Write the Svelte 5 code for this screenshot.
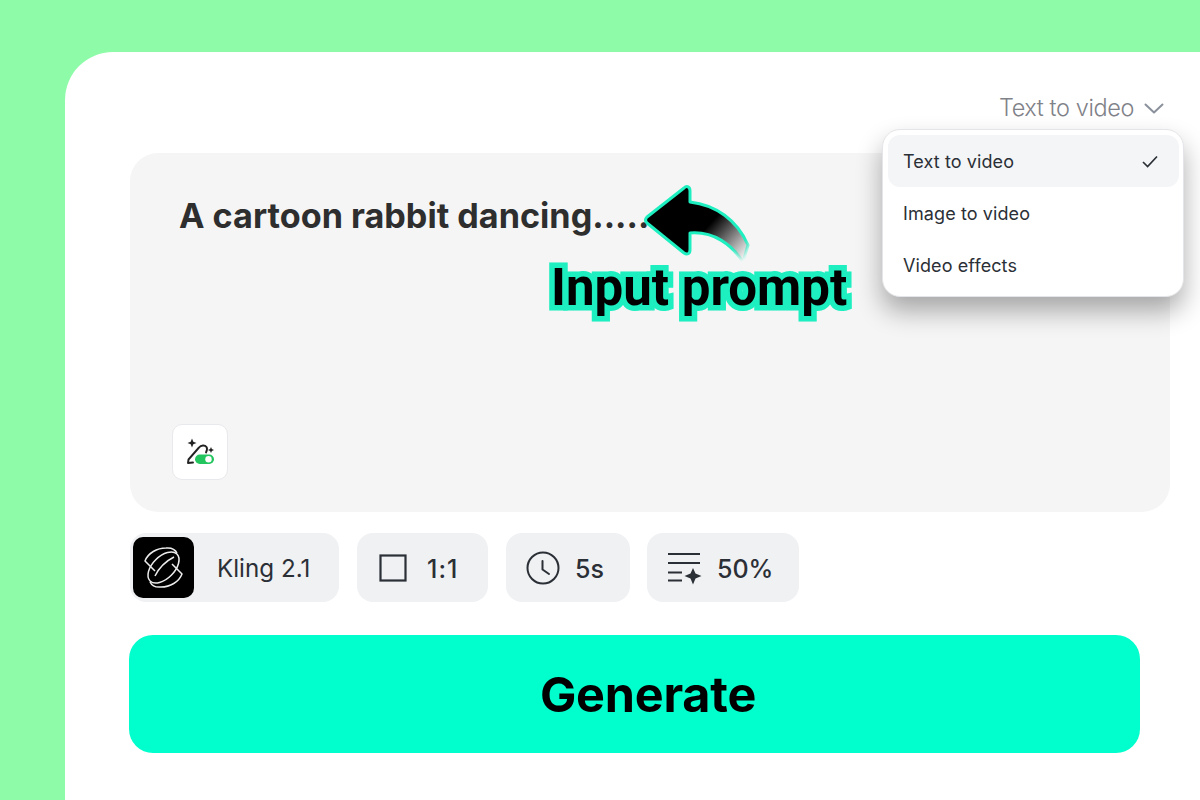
<script>
  const items = ['Text to video', 'Image to video', 'Video effects'];
</script>

<div class="page">
  <main class="card">
    <div class="mode">
      <span>Text to video</span>
      <svg width="22" height="14" viewBox="0 0 22 14" fill="none"><path d="M2.5 3.5 L11 11.5 L19.5 3.5" stroke="#8a919c" stroke-width="2" stroke-linecap="round" stroke-linejoin="round"/></svg>
    </div>

    <section class="prompt">
      <p class="prompt-text">A cartoon rabbit dancing......</p>
      <button class="magic" aria-label="Prompt enhance">
        <svg width="30" height="28" viewBox="0 0 30 28" fill="none">
          <path d="M8 24.5 L3 25 L3.5 21.5 L14 9.5 C16 7 20 7 21.5 9 C22.5 10.5 22 12.5 21 14.5" stroke="#222" stroke-width="1.9" stroke-linecap="round" stroke-linejoin="round"/>
          <path d="M7 0.5 L8.3 3.7 L11.5 5 L8.3 6.3 L7 9.5 L5.7 6.3 L2.5 5 L5.7 3.7Z" fill="#222"/>
          <path d="M26 9 L26.9 11.1 L29 12 L26.9 12.9 L26 15 L25.1 12.9 L23 12 L25.1 11.1Z" fill="#222"/>
          <rect x="10" y="16.5" width="19" height="9.5" rx="4.75" fill="#22c55e"/>
          <circle cx="23.5" cy="21.25" r="3.2" fill="#fff"/>
        </svg>
      </button>
    </section>

    <div class="chips">
      <div class="chip kling">
        <span class="logo">
          <svg width="61" height="61" viewBox="0 0 61 61" fill="none" stroke="#ececec" stroke-width="1.5" stroke-linejoin="round">
            <path d="M22 34 L12 24 C15 16 24 11 33 11 C38 10.5 42 12 44 16"/>
            <path d="M39 27 L49 37 C46 45 37 50 28 50 C23 50.5 19 49 17 45"/>
            <ellipse cx="30.5" cy="30.5" rx="19" ry="11" transform="rotate(-45 30.5 30.5)"/>
            <path d="M22 39 C27 29 33 24 41 20"/>
          </svg>
        </span>
        <span class="name">Kling 2.1</span>
      </div>
      <div class="chip ratio">
        <svg width="28" height="28" viewBox="0 0 28 28" fill="none"><rect x="1.5" y="1.5" width="25" height="25" stroke="#2b2f36" stroke-width="2.2"/></svg>
        <span>1:1</span>
      </div>
      <div class="chip time">
        <svg width="34" height="34" viewBox="0 0 34 34" fill="none" stroke="#2b2f36" stroke-width="2" stroke-linecap="round" stroke-linejoin="round"><circle cx="17" cy="17" r="15.5"/><path d="M16.5 10 V18.5 L23 23"/></svg>
        <span>5s</span>
      </div>
      <div class="chip pct">
        <svg width="36" height="34" viewBox="0 0 36 34" fill="none">
          <path d="M1 3 H33 M1 12 H33 M1 21.5 H15 M1 29.5 H15" stroke="#2b2f36" stroke-width="2"/>
          <path d="M26 17 L28.5 22.5 L34.5 25 L28.5 27.5 L26 33.5 L23.5 27.5 L17.5 25 L23.5 22.5Z" fill="#2b2f36"/>
        </svg>
        <span>50%</span>
      </div>
    </div>

    <button class="generate">Generate</button>

    <div class="menu">
      {#each items as item, i}
        <div class="item" class:active={i === 0}>
          <span>{item}</span>
          {#if i === 0}
            <svg width="16" height="13" viewBox="0 0 16 13" fill="none"><path d="M1 7 L5.6 11.5 L15 1.5" stroke="#2b2f36" stroke-width="1.7"/></svg>
          {/if}
        </div>
      {/each}
    </div>

    <svg class="arrow" width="112" height="96" viewBox="0 0 112 96" fill="none">
      <defs>
        <linearGradient id="fade" gradientUnits="userSpaceOnUse" x1="64" y1="38" x2="104" y2="74">
          <stop offset="0.1" stop-color="#000"/>
          <stop offset="1" stop-color="#000" stop-opacity="0"/>
        </linearGradient>
        <linearGradient id="edge" gradientUnits="userSpaceOnUse" x1="70" y1="30" x2="103" y2="78">
          <stop offset="0.7" stop-color="#1eefc0"/>
          <stop offset="1" stop-color="#1eefc0" stop-opacity="0"/>
        </linearGradient>
      </defs>
      <path d="M42 6 C45 3 48 5 48 9 L48 20 C74 23 95 38 106 63 L101 80 C90 63 72 49 48 51 L48 68 C48 72 45 73 42 71 L5 41 C3 39 3 37 5 35Z" fill="url(#fade)" stroke="url(#edge)" stroke-width="3" stroke-linejoin="round"/>
    </svg>
    <div class="label">Input prompt</div>
  </main>
</div>

<style>
  :global(body) { margin: 0; }
  .page {
    width: 1200px;
    height: 800px;
    background: #8efba9;
    overflow: hidden;
    padding: 52px 0 0 65px;
    box-sizing: border-box;
    font-family: Inter, "Liberation Sans", sans-serif;
  }
  .card {
    position: relative;
    width: 1135px;
    height: 748px;
    background: #fff;
    border-radius: 48px 0 0 0;
    padding: 101px 0 0 65px;
    box-sizing: border-box;
  }
  .mode {
    position: absolute;
    top: 40px;
    right: 35px;
    display: flex;
    align-items: center;
    gap: 9px;
    color: #7f8288;
    font-size: 23.5px;
    font-weight: 300;
    line-height: 32px;
    letter-spacing: -0.4px;
  }
  .prompt {
    width: 1040px;
    height: 359px;
    background: #f5f5f5;
    border-radius: 28px;
    padding: 43px 50px 32px 42px;
    box-sizing: border-box;
    display: flex;
    flex-direction: column;
    justify-content: space-between;
  }
  .prompt-text {
    margin: 0 0 0 7px;
    font-family: Inter, Roboto, sans-serif;
    font-weight: 700;
    font-size: 34.2px;
    line-height: 40px;
    color: #2e2e2e;
  }
  .magic {
    width: 56px;
    height: 56px;
    padding: 0;
    background: #fff;
    border: 1.5px solid #e8e9ec;
    border-radius: 10px;
    display: flex;
    align-items: center;
    justify-content: center;
  }
  .chips {
    display: flex;
    gap: 18px;
    margin-top: 21px;
    height: 69px;
  }
  .chip {
    display: flex;
    align-items: center;
    height: 69px;
    background: #f0f1f3;
    border-radius: 16px;
    font-size: 25px;
    color: #2b2f36;
    box-sizing: border-box;
  }
  .chip span:not(.logo) { position: relative; top: 1px; }
  .kling { width: 209px; padding-left: 3px; gap: 23px; }
  .name { font-size: 24.2px; }
  .logo {
    width: 61px;
    height: 61px;
    background: #000;
    border-radius: 10px;
    display: flex;
    align-items: center;
    justify-content: center;
  }
  .ratio { width: 131px; padding-left: 22px; gap: 20px; font-weight: 500; letter-spacing: 1px; }
  .time { width: 124px; padding-left: 20px; gap: 15px; margin-right: -1px; font-weight: 500; }
  .pct { width: 152px; padding-left: 20px; gap: 14px; font-weight: 500; }
  .generate {
    display: block;
    width: 1011px;
    height: 118px;
    margin: 33px 0 0 -1px;
    background: #00ffcc;
    border: 0;
    border-radius: 24px;
    color: #000;
    font-family: Inter, sans-serif;
    font-weight: 700;
    font-size: 48.5px;
    padding: 0 0 0 27px;
    letter-spacing: -0.2px;
  }
  .menu {
    position: absolute;
    left: 817px;
    top: 77px;
    width: 302px;
    height: 168px;
    box-sizing: border-box;
    background: #fff;
    border: 1px solid #e4e5e8;
    border-radius: 18px;
    padding: 5px 4px 5px 5px;
    box-shadow: 0 14px 26px rgba(0, 0, 0, 0.32);
    font-size: 18px;
    letter-spacing: 0.1px;
    color: #2b2f36;
  }
  .item {
    height: 52px;
    padding: 0 21px 0 15px;
    display: flex;
    align-items: center;
    justify-content: space-between;
    border-radius: 12px;
  }
  .item.active { background: #f4f5f7; }
  .arrow {
    position: absolute;
    left: 577px;
    top: 130px;
  }
  .label {
    position: absolute;
    left: 486px;
    top: 206px;
    font-family: Roboto, Inter, sans-serif;
    font-weight: 700;
    font-size: 51px;
    line-height: 60px;
    color: #000;
    white-space: nowrap;
    -webkit-text-stroke: 11px #1eefc0;
    paint-order: stroke fill;
  }
</style>
